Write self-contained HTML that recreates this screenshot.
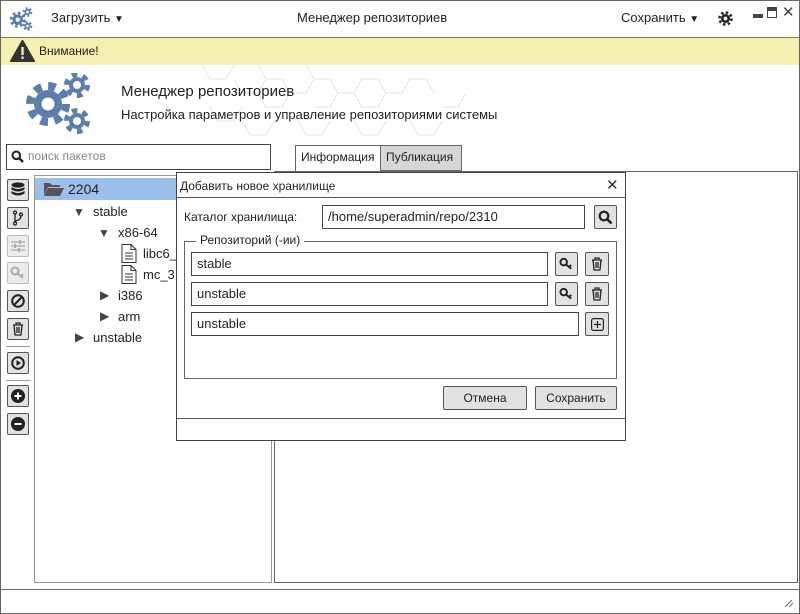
<!DOCTYPE html>
<html><head><meta charset="utf-8"><style>
*{box-sizing:border-box}
body{margin:0;width:800px;height:614px;overflow:hidden;font-family:"Liberation Sans","DejaVu Sans",sans-serif;font-size:13px;color:#222;background:#fff;position:relative}
.a{position:absolute}
.frame{left:0;top:0;width:800px;height:614px;border:1px solid #666}
.btn{position:absolute;background:#e2e2e2;border:1px solid #555;border-radius:2px;display:flex;align-items:center;justify-content:center}
.btn.dis{border-color:#bbb;background:#ececec}
.inp{position:absolute;border:1px solid #444;background:#fff;padding-left:5px;line-height:22px;font-size:13px}
.tb{left:7px;width:22px;height:22px}
.ar{position:absolute;font-size:12px;color:#444}
</style></head><body>
<div class="a frame"></div>
<svg class="a" style="left:8px;top:6px" width="26" height="26" viewBox="0 0 120 120">
<g fill="#5a7fad">
<circle cx="45" cy="63" r="24"/><circle cx="45" cy="63" r="30" fill="none" stroke="#5a7fad" stroke-width="14" stroke-dasharray="12 11.5"/>
<circle cx="90" cy="28" r="14"/><circle cx="90" cy="28" r="18" fill="none" stroke="#5a7fad" stroke-width="9" stroke-dasharray="9 9.8"/>
<circle cx="90" cy="92" r="14"/><circle cx="90" cy="92" r="18" fill="none" stroke="#5a7fad" stroke-width="9" stroke-dasharray="9 9.8"/>
</g><g fill="#fff"><circle cx="45" cy="63" r="10"/><circle cx="90" cy="28" r="6"/><circle cx="90" cy="92" r="6"/></g></svg>
<div class="a" style="left:51px;top:10px;font-size:13px">Загрузить <span style="font-size:10px">▼</span></div>
<div class="a" style="left:297px;top:10px;font-size:13px">Менеджер репозиториев</div>
<div class="a" style="left:621px;top:10px;font-size:13px">Сохранить <span style="font-size:10px">▼</span></div>
<svg class="a" style="left:718px;top:11px" width="15" height="15" viewBox="0 0 20 20"><circle cx="10" cy="10" r="6" fill="#222"/><circle cx="10" cy="10" r="8" fill="none" stroke="#222" stroke-width="3.5" stroke-dasharray="3.2 3.1"/><circle cx="10" cy="10" r="2.5" fill="#fff"/></svg>
<div class="a" style="left:753px;top:14px;width:10px;height:4px;background:#444"></div>
<div class="a" style="left:767px;top:7px;width:10px;height:11px;border:1.5px solid #444;border-top-width:4px"></div>
<div class="a" style="left:782px;top:3px;font-size:15px;color:#444">✕</div>
<div class="a" style="left:1px;top:37px;width:798px;height:1px;background:#777"></div>
<div class="a" style="left:1px;top:38px;width:798px;height:27px;background:#f3f0b0"></div>
<svg class="a" style="left:10px;top:40px" width="25" height="22" viewBox="0 0 25 22"><path d="M12.5 1 L24 21 L1 21 Z" fill="#333" stroke="#333" stroke-linejoin="round" stroke-width="2"/><rect x="11.3" y="7" width="2.4" height="8" fill="#f3f0b0"/><rect x="11.3" y="16.5" width="2.4" height="2.4" fill="#f3f0b0"/></svg>
<div class="a" style="left:39px;top:44px;font-size:12px">Внимание!</div>
<svg class="a" style="left:180px;top:65px" width="330" height="78" viewBox="0 0 330 78"><g fill="none" stroke="#ddd" stroke-width="0.8">
<path d="M22 0 l8 14 h16 l8 -14 M54 14 l8 14 h16 l8 -14 l-8 -14 M86 14 h16 l8 14 l-8 14 h-16 l-8 -14 M110 28 h16 l8 -14 l-8 -14 M134 14 h16 l8 14 l-8 14 h-16 M158 28 h16 l8 -14 M182 14 h16 l8 14 l-8 14 h-16 l-8 -14 M206 28 h16 l8 -14 M230 14 h16 l8 14 M30 42 l8 14 h16 l8 -14 M62 56 l8 14 h16 l8 -14 M118 56 l8 14 h16 l8 -14 M174 56 l8 14 h16 l8 -14 M230 56 l8 14 h16 l8 -14 M262 42 h16 l8 -14"/></g></svg>
<svg class="a" style="left:26px;top:73px" width="66" height="62" viewBox="0 0 66 62">
<g fill="#5a7fad">
<circle cx="22" cy="31" r="14"/><circle cx="22" cy="31" r="18" fill="none" stroke="#5a7fad" stroke-width="8" stroke-dasharray="7.5 6.64"/>
<circle cx="51" cy="12" r="8"/><circle cx="51" cy="12" r="10.5" fill="none" stroke="#5a7fad" stroke-width="5" stroke-dasharray="5.5 5.5"/>
<circle cx="51" cy="48" r="8"/><circle cx="51" cy="48" r="10.5" fill="none" stroke="#5a7fad" stroke-width="5" stroke-dasharray="5.5 5.5"/>
</g><g fill="#fff"><circle cx="22" cy="31" r="6.5"/><circle cx="51" cy="12" r="4"/><circle cx="51" cy="48" r="4"/></g></svg>
<div class="a" style="left:121px;top:83px;font-size:15px">Менеджер репозиториев</div>
<div class="a" style="left:121px;top:107px;font-size:13px">Настройка параметров и управление репозиториями системы</div>
<div class="a" style="left:6px;top:144px;width:265px;height:26px;border:1px solid #444"></div>
<svg class="a" style="left:11px;top:150px" width="13" height="13" viewBox="0 0 13 13"><circle cx="5.3" cy="5.3" r="3.8" fill="none" stroke="#222" stroke-width="2"/><path d="M8 8 L12 12" stroke="#222" stroke-width="2.4"/></svg>
<div class="a" style="left:28px;top:149px;font-size:12px;color:#888">поиск пакетов</div>
<div class="a" style="left:295px;top:145px;width:86px;height:27px;border:1px solid #666;border-bottom:none;background:#fff;font-size:12px;padding:4px 0 0 5px">Информация</div>
<div class="a" style="left:380px;top:145px;width:82px;height:26px;border:1px solid #666;background:#d6d6d6;font-size:12px;padding:4px 0 0 5px">Публикация</div>
<div class="btn tb" style="top:179px"><svg width="14" height="16" viewBox="0 0 14 16"><g fill="#222"><ellipse cx="7" cy="3" rx="6.5" ry="2.6"/><path d="M0.5 5 Q7 9 13.5 5 V7.5 Q7 11.5 0.5 7.5Z"/><path d="M0.5 9 Q7 13 13.5 9 V11.5 Q7 15.5 0.5 11.5Z"/></g></svg></div>
<div class="btn tb" style="top:207px"><svg width="12" height="16" viewBox="0 0 12 16" fill="none" stroke="#222" stroke-width="1.3"><circle cx="3" cy="2.5" r="1.5"/><circle cx="9" cy="4.5" r="1.5"/><circle cx="3" cy="13.5" r="1.5"/><path d="M3 4v8M9 6 Q9 10 3 11"/></svg></div>
<div class="btn tb dis" style="top:235px"><svg width="14" height="12" viewBox="0 0 14 12" stroke="#aaa" stroke-width="1.3"><path d="M0 2h14M0 6h14M0 10h14"/><path d="M9 0v4M4 4v4M8 8v4" stroke-width="2"/></svg></div>
<div class="btn tb dis" style="top:262px"><svg width="16" height="14" viewBox="0 0 16 14" fill="none" stroke="#aaa" stroke-width="2"><circle cx="5" cy="5" r="3.5"/><path d="M7.5 7.5 L13 12 M11 10 L13 8"/></svg></div>
<div class="btn tb" style="top:290px"><svg width="14" height="14" viewBox="0 0 14 14" fill="none" stroke="#222" stroke-width="2"><circle cx="7" cy="7" r="5.8"/><path d="M3 11 L11 3"/></svg></div>
<div class="btn tb" style="top:318px"><svg width="12" height="14" viewBox="0 0 12 14" fill="none" stroke="#222" stroke-width="1.3"><path d="M1 3h10M4 3V1h4v2M2 3l1 10h6l1-10M5 5v6M7 5v6"/></svg></div>
<div class="a" style="left:6px;top:346px;width:24px;height:1px;background:#999"></div>
<div class="btn tb" style="top:352px"><svg width="14" height="14" viewBox="0 0 14 14"><circle cx="7" cy="7" r="5.8" fill="none" stroke="#222" stroke-width="2"/><path d="M5.5 4 L10 7 L5.5 10Z" fill="#222"/></svg></div>
<div class="a" style="left:6px;top:380px;width:24px;height:1px;background:#999"></div>
<div class="btn tb" style="top:385px"><svg width="14" height="14" viewBox="0 0 14 14"><circle cx="7" cy="7" r="7" fill="#222"/><path d="M3.5 7h7M7 3.5v7" stroke="#fff" stroke-width="2"/></svg></div>
<div class="btn tb" style="top:413px"><svg width="14" height="14" viewBox="0 0 14 14"><circle cx="7" cy="7" r="7" fill="#222"/><path d="M3.5 7h7" stroke="#fff" stroke-width="2"/></svg></div>
<div class="a" style="left:34px;top:175px;width:238px;height:408px;border:1px solid #999"></div>
<div class="a" style="left:35px;top:178px;width:236px;height:22px;background:#9dbfec"></div>
<svg class="a" style="left:44px;top:182px" width="20" height="14" viewBox="0 0 20 14"><path d="M0 1h6l2 2h8v2H4L0 13Z" fill="#555"/><path d="M4 6h16l-4 8H0Z" fill="#555"/></svg>
<div class="a" style="left:68px;top:181px;font-size:14px">2204</div>
<div class="ar" style="left:73px;top:205px">▼</div><div class="a" style="left:93px;top:204px">stable</div>
<div class="ar" style="left:98px;top:226px">▼</div><div class="a" style="left:118px;top:225px">x86-64</div>
<svg class="a" style="left:121px;top:244px" width="16" height="19" viewBox="0 0 16 19" fill="none" stroke="#333"><path d="M1 .5h9l5 5v13H1z M10 .5v5h5 M4 9h8M4 12h8M4 15h8"/></svg>
<div class="a" style="left:143px;top:246px">libc6_</div>
<svg class="a" style="left:121px;top:265px" width="16" height="19" viewBox="0 0 16 19" fill="none" stroke="#333"><path d="M1 .5h9l5 5v13H1z M10 .5v5h5 M4 9h8M4 12h8M4 15h8"/></svg>
<div class="a" style="left:143px;top:267px">mc_3</div>
<div class="ar" style="left:100px;top:288px">▶</div><div class="a" style="left:118px;top:288px">i386</div>
<div class="ar" style="left:100px;top:309px">▶</div><div class="a" style="left:118px;top:309px">arm</div>
<div class="ar" style="left:75px;top:330px">▶</div><div class="a" style="left:93px;top:330px">unstable</div>
<div class="a" style="left:274px;top:171px;width:524px;height:412px;border:1px solid #666"></div>
<div class="a" style="left:1px;top:589px;width:798px;height:1px;background:#666"></div>
<svg class="a" style="left:784px;top:598px" width="10" height="10"><path d="M1 9L8 2M5 9L9 5" stroke="#666"/></svg>
<div class="a" style="left:176px;top:172px;width:450px;height:269px;border:1px solid #444;background:#fff"></div>
<div class="a" style="left:180px;top:179px;font-size:12px">Добавить новое хранилище</div>
<div class="a" style="left:606px;top:176px;font-size:15px;color:#333">✕</div>
<div class="a" style="left:177px;top:197px;width:448px;height:1px;background:#555"></div>
<div class="a" style="left:184px;top:210px;font-size:12px">Каталог хранилища:</div>
<div class="inp" style="left:322px;top:205px;width:263px;height:24px">/home/superadmin/repo/2310</div>
<div class="btn" style="left:594px;top:205px;width:23px;height:24px"><svg width="15" height="15" viewBox="0 0 15 15"><circle cx="6" cy="6" r="4.3" fill="none" stroke="#222" stroke-width="2.2"/><path d="M9 9 L13.5 13.5" stroke="#222" stroke-width="2.6"/></svg></div>
<div class="a" style="left:184px;top:241px;width:433px;height:138px;border:1px solid #666"></div>
<div class="a" style="left:196px;top:233px;background:#fff;padding:0 4px;font-size:12px">Репозиторий (-ии)</div>
<div class="inp" style="left:191px;top:252px;width:357px;height:24px">stable</div>
<div class="inp" style="left:191px;top:282px;width:357px;height:24px">unstable</div>
<div class="inp" style="left:191px;top:312px;width:388px;height:24px">unstable</div>
<div class="btn" style="left:555px;top:252px;width:23px;height:24px"><svg width="15" height="14" viewBox="0 0 16 14" fill="none" stroke="#222" stroke-width="2"><circle cx="5" cy="5" r="3.5"/><path d="M7.5 7.5 L13 12 M11 10 L13 8"/></svg></div>
<div class="btn" style="left:555px;top:282px;width:23px;height:24px"><svg width="15" height="14" viewBox="0 0 16 14" fill="none" stroke="#222" stroke-width="2"><circle cx="5" cy="5" r="3.5"/><path d="M7.5 7.5 L13 12 M11 10 L13 8"/></svg></div>
<div class="btn" style="left:585px;top:252px;width:24px;height:24px"><svg width="12" height="14" viewBox="0 0 12 14" fill="none" stroke="#222" stroke-width="1.3"><path d="M1 3h10M4 3V1h4v2M2 3l1 10h6l1-10M5 5v6M7 5v6"/></svg></div>
<div class="btn" style="left:585px;top:282px;width:24px;height:24px"><svg width="12" height="14" viewBox="0 0 12 14" fill="none" stroke="#222" stroke-width="1.3"><path d="M1 3h10M4 3V1h4v2M2 3l1 10h6l1-10M5 5v6M7 5v6"/></svg></div>
<div class="btn" style="left:585px;top:312px;width:24px;height:24px"><svg width="13" height="13" viewBox="0 0 13 13" fill="none" stroke="#222" stroke-width="1.2"><rect x=".6" y=".6" width="11.8" height="11.8" rx="2"/><path d="M6.5 3v7M3 6.5h7"/></svg></div>
<div class="btn" style="left:443px;top:386px;width:84px;height:24px;font-size:12px">Отмена</div>
<div class="btn" style="left:535px;top:386px;width:82px;height:24px;font-size:12px">Сохранить</div>
<div class="a" style="left:177px;top:418px;width:448px;height:1px;background:#555"></div>
</body></html>
